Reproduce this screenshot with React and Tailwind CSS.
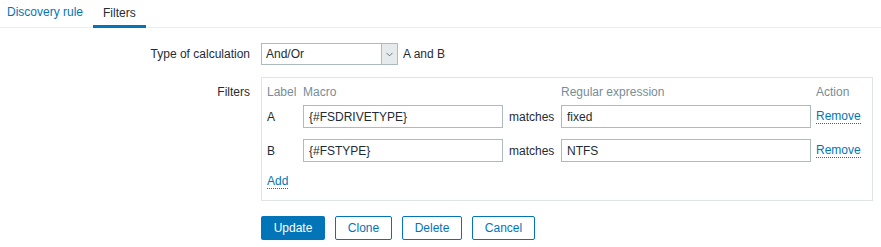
import { ChevronDown } from 'lucide-react';

const rows = [
  { label: 'A', macro: '{#FSDRIVETYPE}', value: 'fixed' },
  { label: 'B', macro: '{#FSTYPE}', value: 'NTFS' },
];

const linkCls = 'text-[#0275b8] border-b border-dotted border-[#0275b8] leading-[13px]';

export default function App() {
  return (
    <div className="w-[881px] h-[247px] bg-white text-[12px] text-[#1f2c33] font-['Liberation_Sans',Arial,sans-serif]">
      {/* Tabs */}
      <div className="flex h-[28px] border-b border-[#ebeef0]">
        <div className="pl-[7px] pr-[10px] flex items-center text-[#0275b8] pb-[3px]">Discovery rule</div>
        <div className="px-[10px] flex items-center border-b-[3px] border-[#0275b8] -mb-px">Filters</div>
      </div>

      {/* Form */}
      <div className="grid grid-cols-[250px_1fr] gap-x-[11px] mt-[15px]">
        <div className="text-right h-[22px] flex items-center justify-end">Type of calculation</div>
        <div className="flex items-center gap-[5px]">
          <div className="w-[137px] h-[22px] border border-[#acbbc2] flex items-center justify-between">
            <span className="pl-[4px]">And/Or</span>
            <span className="w-[16px] h-full bg-[#e6eaec] border-l border-[#acbbc2] flex items-center justify-center">
              <ChevronDown size={11} strokeWidth={1.75} className="text-[#4f5f68]" />
            </span>
          </div>
          <span>A and B</span>
        </div>

        <div className="text-right mt-[12px] pt-[6px]">Filters</div>
        <div className="mt-[12px] w-[612px] border border-[#dfe4e7] pl-[5px] pb-[11px]">
          <div className="grid grid-cols-[36px_200px_58px_250px_auto] items-center">
            <div className="h-[27px] flex items-center text-[#768d99]">Label</div>
            <div className="h-[27px] flex items-center text-[#768d99]">Macro</div>
            <div />
            <div className="h-[27px] flex items-center text-[#768d99]">Regular expression</div>
            <div className="h-[27px] flex items-center text-[#768d99] pl-[5px]">Action</div>
            {rows.map((r, i) => (
              <div key={r.label} className="contents">
                <div className={`h-[23px] flex items-center ${i ? 'mt-[11px]' : ''}`}>{r.label}</div>
                <div className={`h-[23px] border border-[#acbbc2] flex items-center pl-[5px] ${i ? 'mt-[11px]' : ''}`}>{r.macro}</div>
                <div className={`h-[23px] flex items-center pl-[6px] ${i ? 'mt-[11px]' : ''}`}>matches</div>
                <div className={`h-[23px] border border-[#acbbc2] flex items-center pl-[5px] ${i ? 'mt-[11px]' : ''}`}>{r.value}</div>
                <div className={`h-[23px] flex items-center pl-[5px] ${i ? 'mt-[11px]' : ''}`}>
                  <span className={linkCls}>Remove</span>
                </div>
              </div>
            ))}
          </div>
          <div className="mt-[13px] h-[14px] flex items-center">
            <span className={linkCls}>Add</span>
          </div>
        </div>

        <div />
        <div className="flex gap-[10px] mt-[15px]">
          <button className="h-[24px] w-[64px] rounded-[2px] bg-[#0275b8] text-white">Update</button>
          <button className="h-[24px] w-[57px] rounded-[2px] border border-[#0275b8] text-[#0275b8] bg-white">Clone</button>
          <button className="h-[24px] w-[60px] rounded-[2px] border border-[#0275b8] text-[#0275b8] bg-white">Delete</button>
          <button className="h-[24px] w-[63px] rounded-[2px] border border-[#0275b8] text-[#0275b8] bg-white">Cancel</button>
        </div>
      </div>
    </div>
  );
}
